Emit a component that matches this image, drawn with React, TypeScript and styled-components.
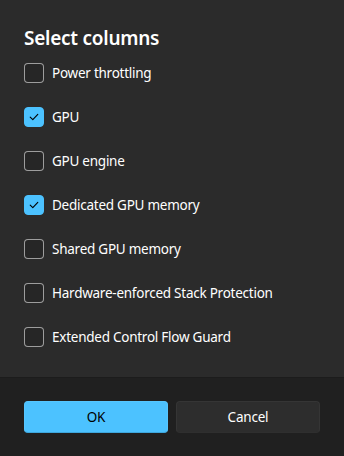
import React, { useState } from "react";
import styled, { createGlobalStyle } from "styled-components";

const Global = createGlobalStyle`
  html, body { margin: 0; padding: 0; background: #202020; }
  body { font-family: "Segoe UI", "Noto Sans", "Open Sans", sans-serif; }
  * { box-sizing: border-box; }
`;

const Dialog = styled.div`
  width: 344px;
  height: 456px;
  display: flex;
  flex-direction: column;
  background: #2b2b2b;
  color: #ffffff;
`;

const Content = styled.div`
  flex: 1;
  padding: 24px 24px 0 24px;
  display: flex;
  flex-direction: column;
`;

const Title = styled.h2`
  margin: 0 0 -1px 0;
  font-size: 19px;
  letter-spacing: -0.25px;
  line-height: 28px;
  font-weight: 600;
  color: #ffffff;
`;

const List = styled.div`
  display: flex;
  flex-direction: column;
`;

const Row = styled.label`
  height: 44px;
  display: flex;
  align-items: center;
  gap: 8px;
  font-size: 13.5px;
  letter-spacing: -0.25px;
  color: #ffffff;
  cursor: pointer;
`;

const Box = styled.span<{ $checked: boolean }>`
  width: 20px;
  height: 20px;
  border-radius: 4px;
  flex: none;
  display: flex;
  align-items: center;
  justify-content: center;
  background: ${(p) => (p.$checked ? "#4cc2ff" : "rgba(0,0,0,0.1)")};
  border: 1px solid ${(p) => (p.$checked ? "#4cc2ff" : "rgba(255,255,255,0.55)")};
`;

const Footer = styled.div`
  height: 79px;
  background: #202020;
  border-top: 1px solid #1c1c1c;
  padding: 23px 24px 0 24px;
  display: grid;
  grid-template-columns: 1fr 1fr;
  column-gap: 8px;
  align-items: start;
`;

const Button = styled.button<{ $primary?: boolean }>`
  height: 32px;
  border-radius: 4px;
  font-family: inherit;
  font-size: 13.5px;
  letter-spacing: -0.2px;
  cursor: pointer;
  background: ${(p) => (p.$primary ? "#4cc2ff" : "#2d2d2d")};
  color: ${(p) => (p.$primary ? "#000000" : "#ffffff")};
  border: 1px solid ${(p) => (p.$primary ? "#56c6ff" : "#353535")};
  border-bottom-color: ${(p) => (p.$primary ? "#3fa7dd" : "#2f2f2f")};
`;

const Check = () => (
  <svg width="12" height="12" viewBox="0 0 12 12" fill="none">
    <path d="M2.2 6.2 L4.8 8.7 L9.8 3.4" stroke="#000" strokeWidth="1.1" strokeLinecap="round" strokeLinejoin="round" />
  </svg>
);

const items = [
  { label: "Power throttling", checked: false },
  { label: "GPU", checked: true },
  { label: "GPU engine", checked: false },
  { label: "Dedicated GPU memory", checked: true },
  { label: "Shared GPU memory", checked: false },
  { label: "Hardware-enforced Stack Protection", checked: false },
  { label: "Extended Control Flow Guard", checked: false },
];

export default function App() {
  const [state, setState] = useState(items.map((i) => i.checked));
  return (
    <>
      <Global />
      <Dialog>
        <Content>
          <Title>Select columns</Title>
          <List>
            {items.map((it, i) => (
              <Row
                key={it.label}
                onClick={() => setState((s) => s.map((v, j) => (j === i ? !v : v)))}
              >
                <Box $checked={state[i]}>{state[i] && <Check />}</Box>
                {it.label}
              </Row>
            ))}
          </List>
        </Content>
        <Footer>
          <Button $primary>OK</Button>
          <Button>Cancel</Button>
        </Footer>
      </Dialog>
    </>
  );
}
